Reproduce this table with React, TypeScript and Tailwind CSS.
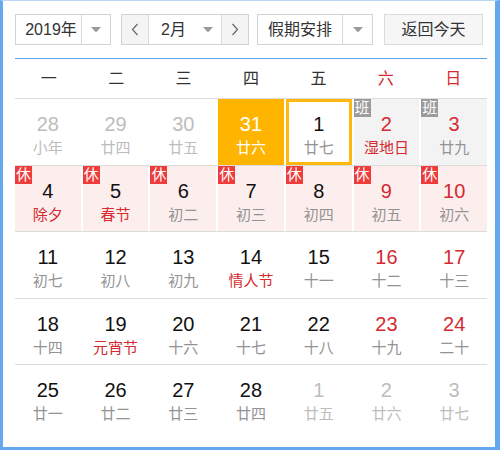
import React from "react";

type Cell = {
  n: number;
  l: string;
  other?: boolean;
  redN?: boolean;
  redL?: boolean;
  badge?: "休" | "班";
  bg?: "sel" | "today" | "pink" | "gray";
};

const rows: Cell[][] = [
  [
    { n: 28, l: "小年", other: true },
    { n: 29, l: "廿四", other: true },
    { n: 30, l: "廿五", other: true },
    { n: 31, l: "廿六", bg: "sel" },
    { n: 1, l: "廿七", bg: "today" },
    { n: 2, l: "湿地日", redN: true, redL: true, badge: "班", bg: "gray" },
    { n: 3, l: "廿九", redN: true, badge: "班", bg: "gray" },
  ],
  [
    { n: 4, l: "除夕", redL: true, badge: "休", bg: "pink" },
    { n: 5, l: "春节", redL: true, badge: "休", bg: "pink" },
    { n: 6, l: "初二", badge: "休", bg: "pink" },
    { n: 7, l: "初三", badge: "休", bg: "pink" },
    { n: 8, l: "初四", badge: "休", bg: "pink" },
    { n: 9, l: "初五", redN: true, badge: "休", bg: "pink" },
    { n: 10, l: "初六", redN: true, badge: "休", bg: "pink" },
  ],
  [
    { n: 11, l: "初七" },
    { n: 12, l: "初八" },
    { n: 13, l: "初九" },
    { n: 14, l: "情人节", redL: true },
    { n: 15, l: "十一" },
    { n: 16, l: "十二", redN: true },
    { n: 17, l: "十三", redN: true },
  ],
  [
    { n: 18, l: "十四" },
    { n: 19, l: "元宵节", redL: true },
    { n: 20, l: "十六" },
    { n: 21, l: "十七" },
    { n: 22, l: "十八" },
    { n: 23, l: "十九", redN: true },
    { n: 24, l: "二十", redN: true },
  ],
  [
    { n: 25, l: "廿一" },
    { n: 26, l: "廿二" },
    { n: 27, l: "廿三" },
    { n: 28, l: "廿四" },
    { n: 1, l: "廿五", other: true },
    { n: 2, l: "廿六", other: true },
    { n: 3, l: "廿七", other: true },
  ],
];

const Tri = () => (
  <svg width="10" height="6" viewBox="0 0 10 6">
    <path d="M0 0 L10 0 L5 5.5 Z" fill="#9a9a9a" />
  </svg>
);

const Chev = ({ dir }: { dir: "l" | "r" }) => (
  <svg width="8" height="13" viewBox="0 0 8 13">
    <path
      d={dir === "l" ? "M6.5 1 L1.5 6.5 L6.5 12" : "M1.5 1 L6.5 6.5 L1.5 12"}
      fill="none"
      stroke="#666"
      strokeWidth="1.2"
    />
  </svg>
);

function CellView({ c }: { c: Cell }) {
  let bg = "bg-white";
  if (c.bg === "sel") bg = "bg-[#ffb400]";
  else if (c.bg === "pink") bg = "bg-[#fdeeee]";
  else if (c.bg === "gray") bg = "bg-[#f3f3f3]";
  const border = c.bg === "today" ? "border-[3px] border-[#ffb80d]" : "";
  let nColor = "text-[#111]";
  let lColor = "text-[#939393]";
  if (c.other) {
    nColor = "text-[#bdbdbd]";
    lColor = "text-[#bdbdbd]";
  }
  if (c.redN) nColor = "text-[#d42a30]";
  if (c.redL) lColor = "text-[#d42a30]";
  if (c.bg === "sel") {
    nColor = "text-white";
    lColor = "text-white";
  }
  return (
    <div className={`relative flex flex-col items-center ${bg} ${border} ${c.bg === "today" ? "pt-[9px]" : "pt-[12px]"}`}>
      {c.badge && (
        <div
          className={`absolute left-0 top-0 w-[17px] h-[18px] flex items-center justify-center text-white text-[15px] leading-[18px] ${
            c.badge === "休" ? "bg-[#ee3b3b]" : "bg-[#9b9b9b]"
          }`}
        >
          {c.badge}
        </div>
      )}
      <div className={`text-[20px] leading-[26px] ${nColor}`}>{c.n}</div>
      <div className={`text-[15px] leading-[20px] mt-[1px] ${lColor}`}>{c.l}</div>
    </div>
  );
}

export default function App() {
  const weekdays = ["一", "二", "三", "四", "五", "六", "日"];
  return (
    <div
      className="w-[500px] h-[450px] bg-white border-l-[3px] border-r-[5px] border-b-[3px] border-t-[1px] border-[#65a8ee] border-t-[#b9d6f5] pl-[12px] pt-[13px] overflow-hidden"
      style={{ fontFamily: '"Liberation Sans", "Noto Sans CJK SC", sans-serif' }}
    >
      {/* header controls */}
      <div className="flex items-center h-[31px] w-[468px] text-[#333]">
        <div className="flex h-[31px] w-[96px] border border-[#d3d3d3] bg-white">
          <div className="flex-1 flex items-center justify-center pl-[5px] text-[16px]">2019年</div>
          <div className="w-[29px] border-l border-[#d8d8d8] flex items-center justify-center">
            <Tri />
          </div>
        </div>
        <div className="flex h-[31px] w-[128px] ml-[10px] border border-[#d3d3d3] bg-white">
          <div className="w-[27px] bg-[#f4f4f4] border-r border-[#d8d8d8] flex items-center justify-center">
            <Chev dir="l" />
          </div>
          <div className="flex-1 flex items-center pl-[12px] pr-[8px] text-[16px]">
            <span className="flex-1">2月</span>
            <Tri />
          </div>
          <div className="w-[27px] bg-[#f4f4f4] border-l border-[#d8d8d8] flex items-center justify-center">
            <Chev dir="r" />
          </div>
        </div>
        <div className="flex h-[31px] w-[116px] ml-[8px] border border-[#d3d3d3] bg-white">
          <div className="flex-1 flex items-center justify-center text-[16px]">假期安排</div>
          <div className="w-[30px] border-l border-[#d8d8d8] flex items-center justify-center">
            <Tri />
          </div>
        </div>
        <div className="flex h-[31px] w-[99px] ml-[11px] border border-[#dcdcdc] bg-[#f6f6f6] items-center justify-center text-[16px]">
          返回今天
        </div>
      </div>

      {/* calendar */}
      <div className="w-[472px] mt-[13px] border-t border-[#5ea5ea]">
        <div className="grid grid-cols-7 h-[39px] items-center text-[16px] text-[#333]">
          {weekdays.map((w, i) => (
            <div key={w} className={`text-center ${i >= 5 ? "text-[#d42a30]" : ""}`}>
              {w}
            </div>
          ))}
        </div>
        {rows.map((r, ri) => (
          <div key={ri} className="grid grid-cols-7 gap-x-[2px] h-[66.6px] border-t border-[#dcdcdc]">
            {r.map((c, ci) => (
              <CellView key={ci} c={c} />
            ))}
          </div>
        ))}
      </div>
    </div>
  );
}
